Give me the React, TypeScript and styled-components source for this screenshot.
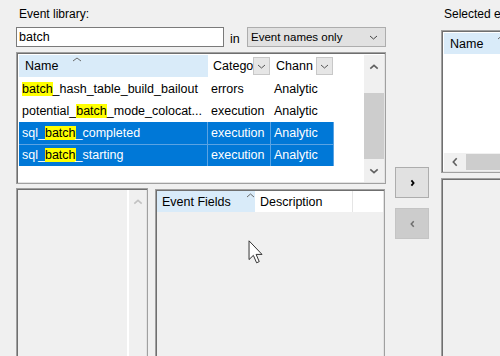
import React from "react";
import styled, { createGlobalStyle, css } from "styled-components";

const GlobalStyle = createGlobalStyle`
  html, body { margin: 0; padding: 0; background: #f0f0f0; }
  body { font-family: "Liberation Sans", Arial, sans-serif; }
`;

const sunken = css`
  box-sizing: border-box;
  border: 1px solid #a0a0a0;
  box-shadow: inset 1px 1px 0 #6f6f6f, inset -1px -1px 0 #e3e3e3;
`;

const Root = styled.div`
  position: relative;
  width: 500px;
  height: 356px;
  overflow: hidden;
  display: flex;
  align-items: flex-start;
  background: #f0f0f0;
  color: #000;
  font-family: "Liberation Sans", Arial, sans-serif;
  font-size: 12.5px;
`;

const LeftColumn = styled.div`
  width: 370px;
  margin-left: 16px;
  flex: none;
  display: flex;
  flex-direction: column;
  & > * { flex-shrink: 0; }
`;

const Label = styled.div`
  height: 27px;
  flex: none;
  box-sizing: border-box;
  padding: 7px 0 0 3px;
  font-size: 12px;
  line-height: 15px;
  white-space: nowrap;
`;

const SearchRow = styled.div`
  display: flex;
  align-items: center;
  height: 20px;
  flex: none;
`;

const TextBox = styled.div`
  box-sizing: border-box;
  width: 208px;
  height: 20px;
  border: 1px solid #7a7a7a;
  background: #fff;
  padding-left: 2px;
  line-height: 18px;
`;

const InLabel = styled.div`
  width: 23px;
  box-sizing: border-box;
  padding-left: 6px;
  padding-top: 3px;
`;

const Combo = styled.div`
  flex: 1;
  box-sizing: border-box;
  height: 20px;
  border: 1px solid #adadad;
  background: #e1e1e1;
  display: flex;
  align-items: center;
  justify-content: space-between;
  padding: 0 7px 0 3px;
  font-size: 11.5px;
`;

const ListFrame = styled.div`
  ${sunken};
  margin-top: 5px;
  height: 132px;
  flex: none;
  padding: 2px 1px 1px 2px;
  display: flex;
  background: #fff;
`;

const Table = styled.div`
  flex: 1;
  display: flex;
  flex-direction: column;
  background: #fff;
`;

const HeaderRow = styled.div<{ $h: number; $gap?: number }>`
  display: flex;
  height: ${(p) => p.$h}px;
  margin-bottom: ${(p) => p.$gap ?? 0}px;
  flex: none;
  background: #fff;
`;

const HeaderCell = styled.div<{ $w?: number; $active?: boolean; $pad?: number; $line?: boolean }>`
  box-sizing: border-box;
  width: ${(p) => (p.$w ? `${p.$w}px` : "auto")};
  flex: ${(p) => (p.$w ? "none" : "1")};
  display: flex;
  align-items: center;
  padding-left: ${(p) => p.$pad ?? 6}px;
  background: ${(p) => (p.$active ? "#d9ebf9" : "#fff")};
  border-right: ${(p) => (p.$line ? "1px solid #e5e5e5" : "none")};
  white-space: nowrap;
  overflow: hidden;
`;

const HeaderText = styled.span`
  flex: 1;
  overflow: hidden;
  white-space: nowrap;
`;

const SortGlyph = styled.span<{ $ml: number }>`
  display: flex;
  align-self: flex-start;
  margin-top: 2px;
  margin-left: ${(p) => p.$ml}px;
`;

const FilterButton = styled.div`
  box-sizing: border-box;
  width: 17px;
  height: 18px;
  margin-right: 1px;
  flex: none;
  background: #e6e6e6;
  border: 1px solid #c8c8c8;
  display: flex;
  align-items: center;
  justify-content: center;
`;

const Row = styled.div`
  display: flex;
  height: 22px;
  flex: none;
`;

const Cell = styled.div<{ $w: number; $sel?: boolean; $top?: boolean }>`
  box-sizing: border-box;
  width: ${(p) => p.$w}px;
  flex: none;
  padding-left: 3px;
  white-space: nowrap;
  overflow: hidden;
  background: ${(p) => (p.$sel ? "#0078d7" : "transparent")};
  color: ${(p) => (p.$sel ? "#fff" : "#000")};
  border-right: 1px solid ${(p) => (p.$sel ? "#5aa3e3" : "transparent")};
  border-top: ${(p) => (p.$top ? "1px solid #5aa3e3" : "none")};
  line-height: ${(p) => (p.$top ? 21 : 22)}px;
`;

const Hit = styled.span`
  background: #ffff00;
  color: #000;
`;

const VScroll = styled.div`
  width: 20px;
  flex: none;
  background: #f0f0f0;
  display: flex;
  flex-direction: column;
`;

const ScrollBtn = styled.div<{ $h: number; $w?: number }>`
  height: ${(p) => p.$h}px;
  width: ${(p) => (p.$w ? `${p.$w}px` : "auto")};
  flex: none;
  display: flex;
  align-items: center;
  justify-content: center;
`;

const VThumb = styled.div`
  margin-top: 14px;
  height: 66px;
  background: #cdcdcd;
  flex: none;
`;

const Spacer = styled.div`
  flex: 1;
`;

const BottomRow = styled.div`
  display: flex;
  align-items: flex-start;
  gap: 7px;
  margin-top: 4px;
  height: 200px;
  flex: none;
`;

const FieldTree = styled.div`
  ${sunken};
  width: 132px;
  height: 200px;
  flex: none;
  padding: 1px 1px 1px 2px;
  display: flex;
  background: #f0f0f0;
`;

const TreeBody = styled.div`
  flex: 1;
  border-right: 2px solid #fff;
`;

const TreeScroll = styled.div`
  width: 17px;
  flex: none;
  display: flex;
  flex-direction: column;
`;

const FieldsPanel = styled.div`
  ${sunken};
  width: 230px;
  height: 200px;
  flex: none;
  margin-top: 1px;
  padding: 1px 1px 0 1px;
  display: flex;
  flex-direction: column;
  background: #f0f0f0;
`;

const MiddleColumn = styled.div`
  width: 55px;
  flex: none;
  box-sizing: border-box;
  padding: 167px 12px 0 9px;
  display: flex;
  flex-direction: column;
  gap: 10px;
`;

const MoveButton = styled.div<{ $disabled?: boolean }>`
  box-sizing: border-box;
  width: 34px;
  height: 31px;
  flex: none;
  border: 1px solid ${(p) => (p.$disabled ? "#c4c4c4" : "#adadad")};
  background: ${(p) => (p.$disabled ? "#cccccc" : "#e1e1e1")};
  display: flex;
  align-items: center;
  justify-content: center;
`;

const RightColumn = styled.div`
  flex: 1;
  min-width: 0;
  display: flex;
  flex-direction: column;
  & > * { flex-shrink: 0; }
`;

const RightLabel = styled(Label)`
  height: 30px;
`;

const SelectedList = styled.div`
  ${sunken};
  width: 150px;
  height: 143px;
  flex: none;
  padding: 2px 1px 1px 2px;
  display: flex;
  flex-direction: column;
  background: #fff;
`;

const ListBody = styled.div`
  flex: 1;
  background: #fff;
`;

const HScroll = styled.div`
  height: 18px;
  flex: none;
  display: flex;
  background: #f0f0f0;
`;

const HThumb = styled.div`
  width: 120px;
  margin: 1px 0;
  background: #cdcdcd;
`;

const LowerPanel = styled.div`
  ${sunken};
  width: 150px;
  height: 200px;
  flex: none;
  margin-top: 5px;
  background: #f0f0f0;
`;

const CursorLayer = styled.div`
  position: absolute;
  left: 248px;
  top: 240px;
  pointer-events: none;
`;

type Dir = "up" | "down" | "left" | "right";

function Chevron({ dir, w, h, color, sw = 1 }: { dir: Dir; w: number; h: number; color: string; sw?: number }) {
  const m = sw / 2 + 0.5;
  const pts: Record<Dir, string> = {
    up: `${m},${h - m} ${w / 2},${m} ${w - m},${h - m}`,
    down: `${m},${m} ${w / 2},${h - m} ${w - m},${m}`,
    left: `${w - m},${m} ${m},${h / 2} ${w - m},${h - m}`,
    right: `${m},${m} ${w - m},${h / 2} ${m},${h - m}`,
  };
  return (
    <svg width={w} height={h} viewBox={`0 0 ${w} ${h}`} style={{ display: "block" }}>
      <polyline points={pts[dir]} fill="none" stroke={color} strokeWidth={sw} strokeLinejoin="miter" />
    </svg>
  );
}

const COLS = [189, 63, 63];

type EventRow = { pre: string; post: string; cat: string; chan: string; sel: boolean };

const rows: EventRow[] = [
  { pre: "", post: "_hash_table_build_bailout", cat: "errors", chan: "Analytic", sel: false },
  { pre: "potential_", post: "_mode_colocat...", cat: "execution", chan: "Analytic", sel: false },
  { pre: "sql_", post: "_completed", cat: "execution", chan: "Analytic", sel: true },
  { pre: "sql_", post: "_starting", cat: "execution", chan: "Analytic", sel: true },
];

export default function App() {
  return (
    <Root>
      <GlobalStyle />
      <LeftColumn>
        <Label>Event library:</Label>
        <SearchRow>
          <TextBox>batch</TextBox>
          <InLabel>in</InLabel>
          <Combo>
            <span>Event names only</span>
            <Chevron dir="down" w={9} h={5} color="#444" />
          </Combo>
        </SearchRow>

        <ListFrame>
          <Table>
            <HeaderRow $h={22} $gap={1}>
              <HeaderCell $w={COLS[0]} $active>
                <span>Name</span>
                <SortGlyph $ml={14}>
                  <Chevron dir="up" w={10} h={5} color="#6a6a6a" />
                </SortGlyph>
              </HeaderCell>
              <HeaderCell $w={COLS[1]} $pad={5}>
                <HeaderText>Catego</HeaderText>
                <FilterButton>
                  <Chevron dir="down" w={9} h={5} color="#555" />
                </FilterButton>
              </HeaderCell>
              <HeaderCell $w={COLS[2]} $pad={5}>
                <HeaderText>Chann</HeaderText>
                <FilterButton>
                  <Chevron dir="down" w={9} h={5} color="#555" />
                </FilterButton>
              </HeaderCell>
            </HeaderRow>
            {rows.map((r, i) => {
              const top = r.sel && i > 0 && rows[i - 1].sel;
              return (
                <Row key={i}>
                  <Cell $w={COLS[0]} $sel={r.sel} $top={top}>
                    {r.pre}
                    <Hit>batch</Hit>
                    {r.post}
                  </Cell>
                  <Cell $w={COLS[1]} $sel={r.sel} $top={top}>
                    {r.cat}
                  </Cell>
                  <Cell $w={COLS[2]} $sel={r.sel} $top={top}>
                    {r.chan}
                  </Cell>
                </Row>
              );
            })}
          </Table>
          <VScroll>
            <ScrollBtn $h={24}>
              <Chevron dir="up" w={10} h={6} color="#606060" sw={1.6} />
            </ScrollBtn>
            <VThumb />
            <Spacer />
            <ScrollBtn $h={24}>
              <Chevron dir="down" w={10} h={6} color="#606060" sw={1.6} />
            </ScrollBtn>
          </VScroll>
        </ListFrame>

        <BottomRow>
          <FieldTree>
            <TreeBody />
            <TreeScroll>
              <ScrollBtn $h={24}>
                <Chevron dir="up" w={10} h={6} color="#c2c2c2" sw={1.6} />
              </ScrollBtn>
            </TreeScroll>
          </FieldTree>
          <FieldsPanel>
            <HeaderRow $h={21}>
              <HeaderCell $w={98} $active $pad={5}>
                <span>Event Fields</span>
                <SortGlyph $ml={15}>
                  <Chevron dir="up" w={9} h={5} color="#6a6a6a" />
                </SortGlyph>
              </HeaderCell>
              <HeaderCell $w={98} $pad={5} $line>
                <span>Description</span>
              </HeaderCell>
              <HeaderCell />
            </HeaderRow>
          </FieldsPanel>
        </BottomRow>
      </LeftColumn>

      <MiddleColumn>
        <MoveButton>
          <Chevron dir="right" w={5} h={8} color="#000" sw={1.8} />
        </MoveButton>
        <MoveButton $disabled>
          <Chevron dir="left" w={5} h={8} color="#6d6d6d" sw={1.5} />
        </MoveButton>
      </MiddleColumn>

      <RightColumn>
        <RightLabel>Selected events:</RightLabel>
        <SelectedList>
          <HeaderRow $h={21}>
            <HeaderCell $active $pad={6}>
              <span>Name</span>
              <SortGlyph $ml={14}>
                <Chevron dir="up" w={9} h={5} color="#6a6a6a" />
              </SortGlyph>
            </HeaderCell>
          </HeaderRow>
          <ListBody />
          <HScroll>
            <ScrollBtn $h={18} $w={22}>
              <Chevron dir="left" w={6} h={10} color="#606060" sw={1.6} />
            </ScrollBtn>
            <HThumb />
          </HScroll>
        </SelectedList>
        <LowerPanel />
      </RightColumn>

      <CursorLayer>
        <svg width="16" height="24" viewBox="0 0 13 20">
          <path
            d="M0.7,0.7 L0.7,16.3 L4.3,12.8 L7,19 L9.2,18 L6.6,12 L11.5,12 Z"
            fill="#fff"
            stroke="#2b2b2b"
            strokeWidth="0.8"
            strokeLinejoin="miter"
          />
        </svg>
      </CursorLayer>
    </Root>
  );
}
